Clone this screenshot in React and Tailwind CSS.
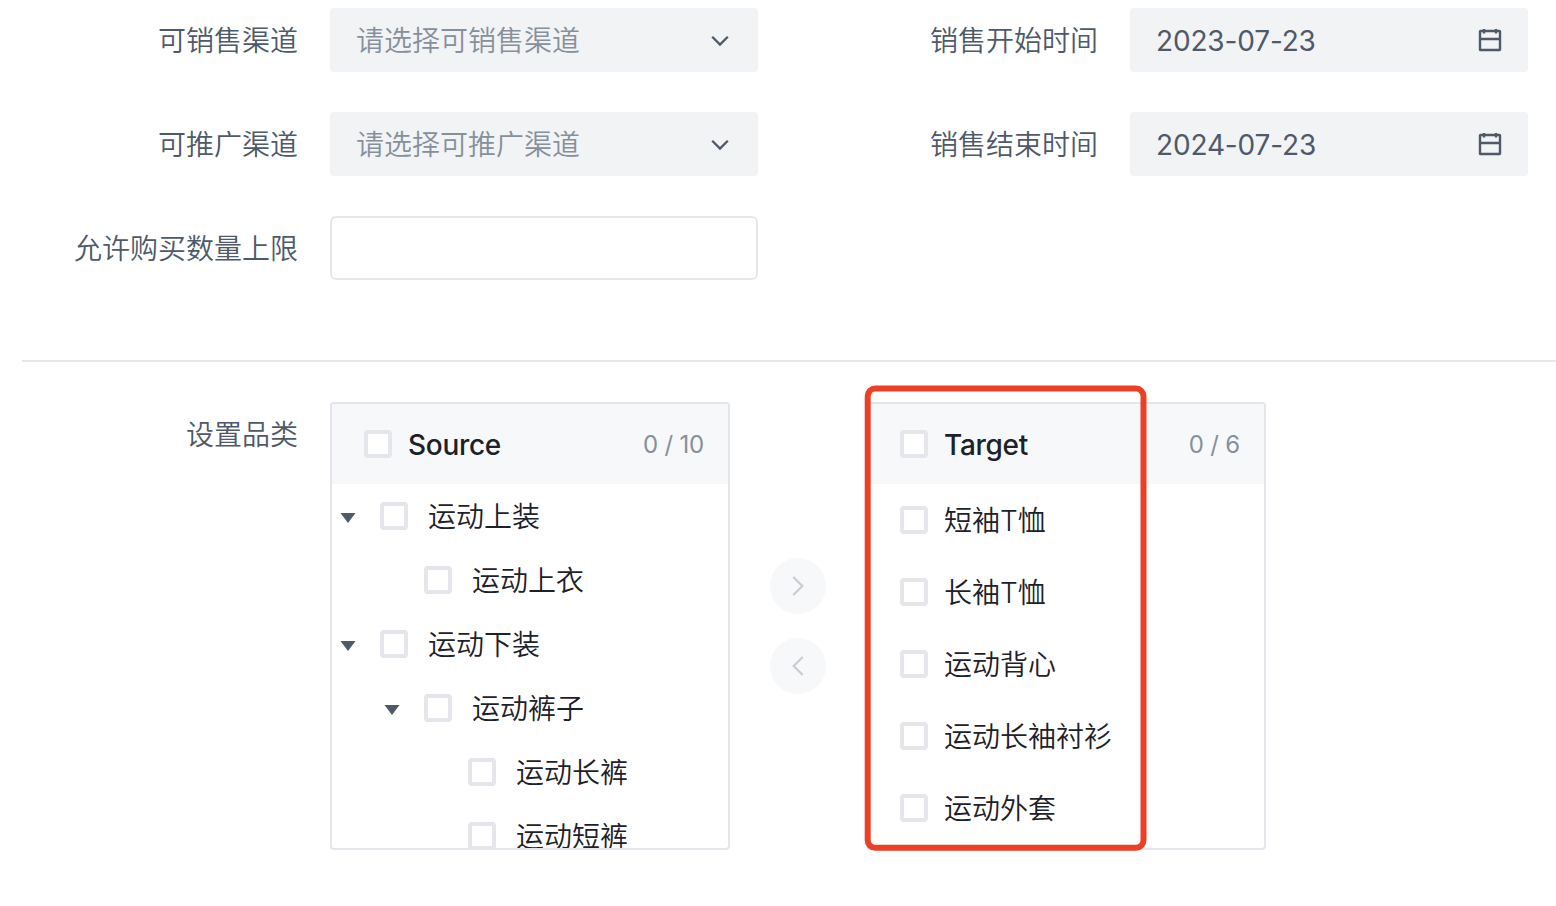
import React from "react";

const label = "text-right text-[#4e5969] whitespace-nowrap font-[350] pt-0.5";

function Chevron() {
  return (
    <svg width="28" height="28" viewBox="0 0 28 28" fill="none" stroke="#4e5969" strokeWidth="2.3">
      <path d="M6.2 10.8 14 18.6l7.8-7.8" />
    </svg>
  );
}

function Calendar() {
  return (
    <svg width="28" height="28" viewBox="0 0 28 28" fill="none" stroke="#4e5969" strokeWidth="2.4">
      <rect x="4" y="5" width="20" height="19" rx="0.6" />
      <path d="M4 13h20M8 3v4.6M20 3v4.6" />
    </svg>
  );
}

function Select({ children }) {
  return (
    <div className="flex h-16 w-[428px] items-center justify-between rounded-[4px] bg-[#f2f3f5] pl-[26px] pr-6 text-[#86909c]">
      <span className="pt-0.5 font-[350]">{children}</span>
      <Chevron />
    </div>
  );
}

function DateInput({ children }) {
  return (
    <div className="flex h-16 w-[398px] items-center justify-between rounded-[4px] bg-[#f2f3f5] pl-[26px] pr-6 text-[#4e5969]">
      <span className="pt-0.5 tracking-[-0.15px]">{children}</span>
      <Calendar />
    </div>
  );
}

function Checkbox() {
  return <span className="size-7 shrink-0 rounded-[4px] border-4 border-[#e5e6eb] bg-white" />;
}

function Panel({ title, count, children }) {
  return (
    <section className="h-[448px] w-[400px] shrink-0 overflow-hidden rounded-[4px] border-2 border-[#e5e6eb]">
      <header className="flex h-20 items-center bg-[#f7f8fa] pl-8 pr-6">
        <Checkbox />
        <span className="ml-4 flex-1 pt-0.5 font-medium tracking-[-0.3px]">{title}</span>
        <span className="pt-0.5 text-[24px] tracking-[-0.2px] text-[#86909c]">{count}</span>
      </header>
      {children}
    </section>
  );
}

const tree = [
  { text: "运动上装", level: 0, open: true },
  { text: "运动上衣", level: 1 },
  { text: "运动下装", level: 0, open: true },
  { text: "运动裤子", level: 1, open: true },
  { text: "运动长裤", level: 2 },
  { text: "运动短裤", level: 2 },
];
const indents = ["pl-2", "pl-[52px]", "pl-24"];
const targets = ["短袖T恤", "长袖T恤", "运动背心", "运动长袖衬衫", "运动外套"];

function MoveButton({ d }) {
  return (
    <button className="flex size-14 items-center justify-center rounded-full bg-[#f7f8fa]">
      <svg width="28" height="28" viewBox="0 0 28 28" fill="none" stroke="#c9cdd4" strokeWidth="2.3">
        <path d={d} />
      </svg>
    </button>
  );
}

export default function App() {
  return (
    <main className="h-[906px] w-[1556px] overflow-hidden bg-white pt-2 font-['Inter','Noto_Sans_CJK_SC',sans-serif] text-[28px] leading-10 text-[#1d2129]">
      <div className="grid grid-cols-[298px_428px_340px_398px] items-center gap-y-10">
        <div className={label}>可销售渠道</div>
        <div className="pl-8"><Select>请选择可销售渠道</Select></div>
        <div className={label + " pl-8"}><span className="mr-[-32px]">销售开始时间</span></div>
        <div className="pl-16"><DateInput>2023-07-23</DateInput></div>
        <div className={label}>可推广渠道</div>
        <div className="pl-8"><Select>请选择可推广渠道</Select></div>
        <div className={label + " pl-8"}><span className="mr-[-32px]">销售结束时间</span></div>
        <div className="pl-16"><DateInput>2024-07-23</DateInput></div>
        <div className={label}>允许购买数量上限</div>
        <div className="pl-8"><div className="h-16 w-[428px] rounded-[6px] border-2 border-[#e5e6eb]" /></div>
      </div>
      <div className="ml-[22px] mt-20 h-0.5 bg-[#e5e6eb]" />
      <div className="mt-10 flex">
        <div className="w-[298px] shrink-0 pt-[13px] text-right font-[350] text-[#4e5969]">设置品类</div>
        <div className="relative ml-8 flex">
          <Panel title="Source" count="0 / 10">
            {tree.map((n) => (
              <div key={n.text} className={"flex h-16 items-center " + indents[n.level]}>
                <span className="mr-6 flex w-4 justify-center">
                  {n.open && (
                    <svg width="16" height="10" viewBox="0 0 16 10" className="relative top-0.5">
                      <path d="M.5 0h15L8 10z" fill="#4e5969" />
                    </svg>
                  )}
                </span>
                <Checkbox />
                <span className="ml-5 pt-0.5 font-[350]">{n.text}</span>
              </div>
            ))}
          </Panel>
          <div className="flex w-[136px] flex-col items-center justify-center gap-6">
            <MoveButton d="M9.3 5 18.3 14l-9 9" />
            <MoveButton d="M18.7 5 9.7 14l9 9" />
          </div>
          <Panel title="Target" count="0 / 6">
            {targets.map((t) => (
              <div key={t} className="flex h-[72px] items-center pl-8">
                <Checkbox />
                <span className="ml-4 pt-0.5 font-[350]">{t}</span>
              </div>
            ))}
          </Panel>
          <svg width="284" height="468" viewBox="0 0 284 468" className="pointer-events-none absolute left-[534px] top-[-18px]">
            <rect x="3.7" y="4.6" width="275.8" height="459.2" rx="7.5" fill="none" stroke="#eb4026" strokeWidth="6" />
          </svg>
        </div>
      </div>
    </main>
  );
}
